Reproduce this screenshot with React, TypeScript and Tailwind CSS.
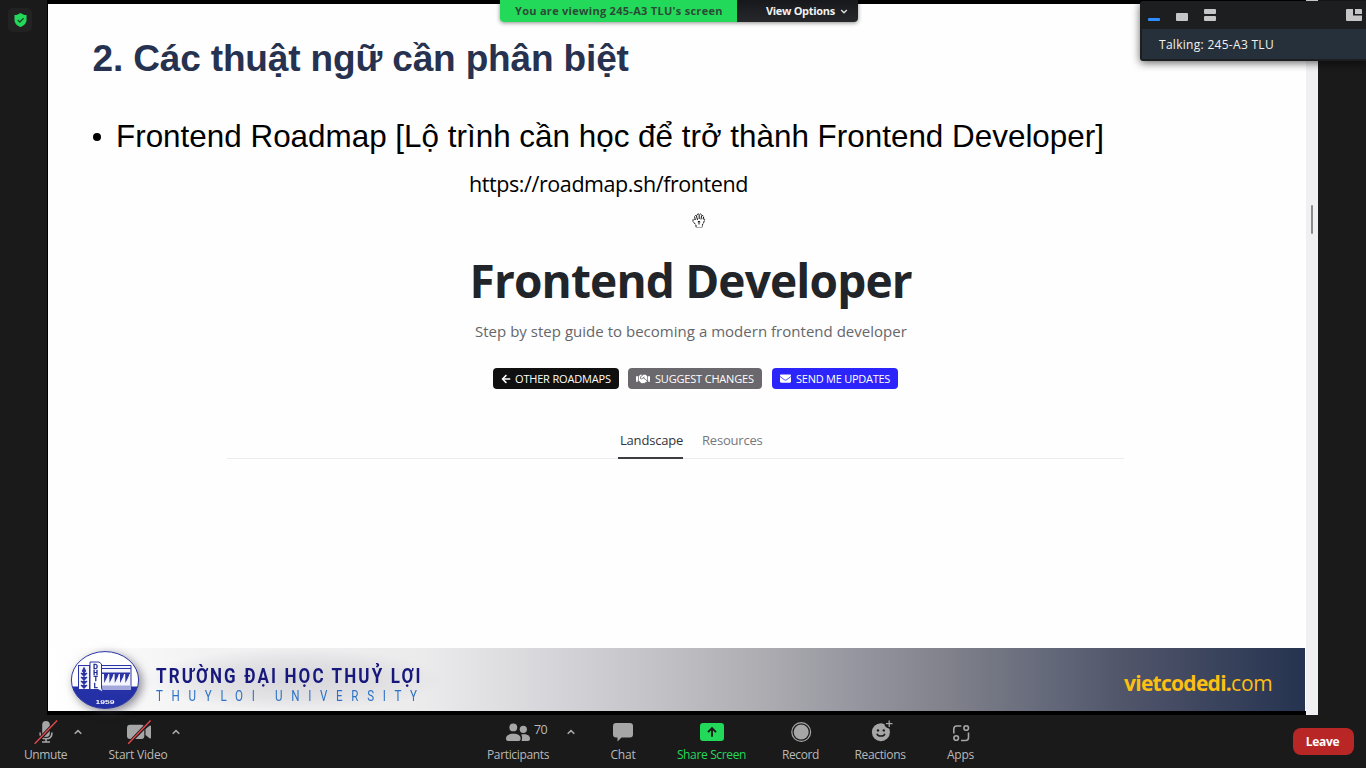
import type { ReactNode } from "react";
import { FaArrowLeft, FaEnvelope, FaHandshake } from "react-icons/fa";

function Caret() {
  return (
    <svg className="mt-[14px] h-[6px] w-[10px] shrink-0" viewBox="0 0 10 6" fill="none" stroke="#a8a8a8" strokeWidth="1.6">
      <path d="M1.7 4.8 5 1.6 8.3 4.8" />
    </svg>
  );
}

function Tool({ label, className, children }: { label: string; className: string; children: ReactNode }) {
  return (
    <div className={`flex shrink-0 flex-col items-center pt-[5px] text-[#b9b9b9] ${className}`}>
      <svg className="h-6 w-6 shrink-0 overflow-visible" viewBox="0 0 24 24" fill="#a6a6a6">
        {children}
      </svg>
      <span className="mt-[3px] h-4 text-[12px] leading-4 whitespace-nowrap">{label}</span>
    </div>
  );
}

function Slash() {
  return (
    <>
      <path d="M.3 24.4 22.9 1" stroke="#1a1a1a" strokeWidth="3.4" />
      <path d="M.7 23.7 23.1.4" stroke="#e5484d" strokeWidth="1.4" />
    </>
  );
}

function Seal() {
  return (
    <svg className="mt-[1px] h-[60px] w-[70px] shrink-0 drop-shadow-[3px_3px_5px_rgba(60,60,75,0.6)]" viewBox="0 0 70 60">
      <defs>
        <clipPath id="seal">
          <ellipse cx="35" cy="30" rx="33.6" ry="28.4" />
        </clipPath>
      </defs>
      <ellipse cx="35" cy="30" rx="33.6" ry="28.4" fill="#fff" />
      <g clipPath="url(#seal)">
        <rect x="0" y="36.5" width="70" height="24" fill="#2330a6" />
        <rect x="8.5" y="15.5" width="11" height="24" fill="#f4f5fc" stroke="#2a34a4" />
        <path d="M14 19v20M11 23l3 3 3-3M11 27l3 3 3-3M11 31l3 3 3-3M11 35l3 3 3-3M14 18l-1.5 3 1.5 2 1.5-2z" stroke="#2a34a4" strokeWidth="1.3" fill="#2a34a4" />
        <rect x="31" y="15.5" width="30" height="24" fill="#f4f5fc" />
        <path d="M31 15.5h30M31 18.5h30M31 40h30M31 43h30M61 15.5v24" stroke="#2a34a4" strokeWidth="1" fill="none" />
        <path d="M32 22.5h28v1.5H32zM34 24h4.2l-1 3-3 6zM39.3 24h4.2l-1 3-3 6zM44.6 24h4.2l-1 3-3 6zM49.9 24h4.2l-1 3-3 6zM55.2 24h4.2l-1 3-3 6z" fill="#2a34a4" />
        <path d="M32 35.5h29v4.500H32z" fill="#a3a8dc" />
        <path d="M20 12h9l2.500 2v24l1.500 4-5-2.500h-8z" fill="#fff" stroke="#2a34a4" />
      </g>
      <ellipse cx="35" cy="30" rx="33.6" ry="28.4" fill="none" stroke="#2a34a4" />
      <g fontFamily="'Liberation Sans', sans-serif" fontWeight="700" textAnchor="middle">
        <g fill="#1e2795" stroke="#1e2795" strokeWidth="0.3" fontSize="6.4">
          <text x="25.6" y="19.2">D</text>
          <text x="25.6" y="25.3">H</text>
          <text x="25.6" y="31.4">T</text>
          <text x="25.6" y="37.5">L</text>
        </g>
        <text x="35" y="53.500" fill="#fff" fontSize="6" textLength="19" lengthAdjust="spacingAndGlyphs">1959</text>
      </g>
    </svg>
  );
}

function HandCursor() {
  return (
    <svg className="absolute top-[209px] left-[644px] h-[15px] w-[14px]" viewBox="0 0 14 15" fill="#fff" stroke="#111" strokeWidth="1">
      <path d="M4 14v-2L1 8.500V6.500l1.500-.5L3.500 7 2.500 3.500 3.500 2.500l1 .5.500-1.500L6.500 1l.8.7L8.500 1l1 .8V3l1.300-.5.9 1-.7 3 .9-.8.9.8L11.500 10 10.300 12v2" strokeDasharray="2.500 .7" />
      <path d="M4.500 3l1 4M7.200 1.700V6M9.500 3 9 6.500M7 8.500v3M5.800 9l1.200-.8L8.200 9" />
      <path d="M4 14.500h6.500" stroke="#aaa" />
    </svg>
  );
}

function RoadmapButton({ icon, label, className }: { icon: ReactNode; label: string; className: string }) {
  return (
    <div className={`flex h-[21px] items-center rounded-[4px] text-[11px] leading-[21px] font-medium whitespace-nowrap text-white ${className}`}>
      {icon}
      <span>{label}</span>
    </div>
  );
}

function Slide() {
  return (
    <main className="relative flex h-[707px] w-[1258px] flex-col bg-[#fefefe]">
      <h1 className="mt-[35px] h-10 pl-[44.500px] font-['Liberation_Sans',sans-serif] text-[37px] leading-10 font-bold tracking-[-0.150px] whitespace-nowrap text-[#26324f]">
        2. Các thuật ngữ cần phân biệt
      </h1>
      <div className="mt-[38px] flex h-10 items-center pl-[45px] font-['Liberation_Sans',sans-serif] text-[31.4px] leading-10 tracking-[0.010px] whitespace-nowrap text-black">
        <span className="mr-[15px] size-2 rounded-full bg-black" />
        <p>Frontend Roadmap [Lộ trình cần học để trở thành Frontend Developer]</p>
      </div>
      <p className="mt-[13px] h-7 pl-[421px] text-[21.500px] leading-7 tracking-[-0.42px] whitespace-nowrap text-black">https://roadmap.sh/frontend</p>
      <HandCursor />
      <h2 className="mt-[52px] h-[60px] pl-[421.500px] text-[46px] leading-[60px] font-bold tracking-[-0.850px] whitespace-nowrap text-[#212529]">Frontend Developer</h2>
      <p className="mt-[10px] h-[21px] pl-[427px] text-[15px] leading-[22px] tracking-[0.020px] whitespace-nowrap text-[#66666a]">
        Step by step guide to becoming a modern frontend developer
      </p>
      <div className="mt-[27px] flex pl-[445px] tracking-[-0.180px]">
        <RoadmapButton className="w-[126px] bg-[#101010] pl-[8px]" icon={<FaArrowLeft className="mr-[4px] size-[10px]" />} label="OTHER ROADMAPS" />
        <RoadmapButton className="ml-[9px] w-[134px] bg-[#6a686c] pl-[8px]" icon={<FaHandshake className="mr-[5px] size-[14px]" />} label="SUGGEST CHANGES" />
        <RoadmapButton className="ml-[10px] w-[126px] bg-[#2b25fb] pl-[8px] tracking-[-0.250px]" icon={<FaEnvelope className="mr-[5px] size-[11px]" />} label="SEND ME UPDATES" />
      </div>
      <div className="mt-[41px] ml-[179px] flex h-[29px] w-[897px] border-b border-[#ececee] pl-[391px] text-[13px] leading-5 tracking-[-0.200px]">
        <span className="h-[29px] w-[65px] border-b-2 border-[#3c3c42] pl-[2px] text-[#33333a]">Landscape</span>
        <span className="ml-[19px] text-[#77777b]">Resources</span>
      </div>
      <footer className="mt-auto flex h-[63px] w-[1257px] items-center bg-[linear-gradient(90deg,#ffffff_0%,#f3f3f4_12%,#ebebec_30%,#d8d8dc_39%,#c6c5ca_47%,#aeadb2_56.600%,#95959f_64.500%,#80818a_71.700%,#64697a_79.600%,#52566b_85.200%,#253350_100%)] pl-[22px]">
        <Seal />
        <div className="ml-[4px] flex h-[63px] w-[300px] flex-col bg-[radial-gradient(closest-side,#c4c4cc90_0%,#ccccd260_60%,transparent_100%)] pl-[12px] font-['Roboto',sans-serif] whitespace-nowrap">
          <span className="mt-[16px] h-6 origin-left scale-x-[0.85] text-[20px] leading-6 font-bold tracking-[2.500px] text-[#17187c]">TRƯỜNG ĐẠI HỌC THUỶ LỢI</span>
          <span className="mt-[2px] h-4 origin-left scale-x-[0.8] text-[14.500px] leading-[13px] tracking-[10.850px] text-[#2d72c4]">THUYLOI UNIVERSITY</span>
        </div>
        <div className="mt-[6px] ml-auto pr-[32.500px] text-[21px] leading-8 whitespace-nowrap text-[#fdbf12]">
          <span className="font-bold tracking-[-0.720px]">vietcodedi.</span>
          <span className="tracking-[-0.250px]">com</span>
        </div>
      </footer>
    </main>
  );
}

function ShareBanner() {
  return (
    <div className="absolute top-0 left-[500px] flex h-[22px] w-[358px] overflow-hidden rounded-b-[4px] text-[11px] leading-[21px] font-bold whitespace-nowrap shadow-[0_1px_4px_rgba(0,0,0,0.45)]">
      <div className="w-[237px] bg-[#23d959] pl-[15px] tracking-[0.290px] text-[#2c4a37]">You are viewing 245-A3 TLU's screen</div>
      <div className="flex flex-1 items-center bg-[linear-gradient(#17181b,#27282b)] pl-[29px] tracking-[-0.320px] text-[#f2f2f2]">
        <span className="h-[22px]">View Options</span>
        <svg className="ml-[5px] h-[5px] w-[8px]" viewBox="0 0 8 5" fill="none" stroke="#ddd" strokeWidth="1.400">
          <path d="M1.200 1 4 3.700 6.800 1" />
        </svg>
      </div>
    </div>
  );
}

function SpeakerPanel() {
  return (
    <div className="absolute top-[1px] left-[1140px] h-[60px] w-[226px] rounded-l-[3px] bg-[#1c1e20] pb-[2px] pl-[2px] shadow-[0_2px_8px_rgba(0,0,0,0.6)]">
      <svg className="block h-[28px] w-[224px]" viewBox="0 0 224 28" fill="#c6c6c6">
        <rect x="6" y="17" width="12" height="3" rx="1" fill="#2e8cff" />
        <rect x="34" y="12" width="12" height="8" rx="1" />
        <rect x="62" y="8" width="12" height="5" rx="1" />
        <rect x="62" y="15" width="12" height="5" rx="1" />
        <path d="M205 8h6v6.500h9V19a1 1 0 0 1-1 1h-14a1 1 0 0 1-1-1V9a1 1 0 0 1 1-1zM213 8h6a1 1 0 0 1 1 1v4h-7z" />
      </svg>
      <p className="h-[30px] bg-[#26303a] pl-[17px] text-[12px] leading-[31px] tracking-[0.290px] text-[#f0f0f0]">Talking: 245-A3 TLU</p>
    </div>
  );
}

function Toolbar() {
  return (
    <nav className="flex h-[53px] bg-[#1a1a1a]">
      <Tool label="Unmute" className="ml-[24px] w-[43px] tracking-[-0.400px]">
        <rect x="8.200" y="1" width="7.600" height="16" rx="3.800" />
        <path d="M6 12.500c0 4 2.400 6.300 6 6.300s6-2.300 6-6.300M12 18.800V22M8 22h8" fill="none" stroke="#a6a6a6" strokeWidth="1.600" />
        <Slash />
      </Tool>
      <div className="ml-[6px]"><Caret /></div>
      <Tool label="Start Video" className="ml-[25px] w-[60px] tracking-[-0.200px]">
        <rect x="1" y="4.700" width="17.300" height="14.300" rx="3" />
        <path d="M19.500 9 23.500 5.800q1.500-.7 1.500.8v10.800q0 1.500-1.500.8L19.500 15z" />
        <g transform="translate(1.500 0)"><Slash /></g>
      </Tool>
      <div className="ml-[3px]"><Caret /></div>
      <Tool label="Participants" className="ml-[306px] w-[62px] tracking-[-0.350px]">
        <circle cx="7.300" cy="7.400" r="3.900" />
        <path d="M0 18.500c0-3 2.500-4.700 7.300-4.700s7.300 1.700 7.300 4.700c0 1.500-.5 2.500-2 2.500H2c-1.500 0-2-1-2-2.500z" />
        <circle cx="17.300" cy="9.300" r="3.600" />
        <path d="M15.200 14.600c5-1 8.800.6 8.800 4 0 1.400-.5 2.400-2 2.400h-6.500c.8-2.300.8-4.300-.3-6.400z" />
      </Tool>
      <span className="-ml-[15px] h-5 w-[14px] pt-[6px] text-[12.500px] leading-[17px] tracking-[-0.700px] text-[#b9b9b9]">70</span>
      <div className="ml-[18px]"><Caret /></div>
      <Tool label="Chat" className="ml-[34px] w-[26px] tracking-[-0.200px]">
        <path d="M5 3h14a3 3 0 0 1 3 3v8.500a3 3 0 0 1-3 3h-8.500L6.500 21.500v-4H5a3 3 0 0 1-3-3V6a3 3 0 0 1 3-3z" />
      </Tool>
      <Tool label="Share Screen" className="ml-[40.500px] w-[70px] tracking-[-0.350px] [&>span]:text-[#23d959]">
        <rect x="0" y="3" width="24" height="18" rx="3" fill="#23d959" />
        <path d="M12 16.800V8.500M8 12.200l4-4 4 4" fill="none" stroke="#1a1a1a" strokeWidth="1.900" />
      </Tool>
      <Tool label="Record" className="ml-[35px] w-[38px] tracking-[-0.400px]">
        <circle cx="12.200" cy="12" r="9.400" fill="none" stroke="#a6a6a6" strokeWidth="1.200" />
        <circle cx="12.200" cy="12" r="7.500" />
      </Tool>
      <Tool label="Reactions" className="ml-[35px] w-[51px] tracking-[-0.350px]">
        <circle cx="12.900" cy="12.200" r="9" />
        <circle cx="21.200" cy="3.700" r="4.800" fill="#1a1a1a" />
        <path d="M21.200 .4v6.600M17.900 3.700h6.600" stroke="#a6a6a6" strokeWidth="1.300" />
        <circle cx="10" cy="10.400" r="1.200" fill="#1a1a1a" />
        <circle cx="15.800" cy="10.400" r="1.200" fill="#1a1a1a" />
        <path d="M8.900 13.700c1 3.200 7 3.200 8 0" fill="none" stroke="#1a1a1a" strokeWidth="1.500" />
      </Tool>
      <Tool label="Apps" className="ml-[41px] w-[28px] tracking-[-0.200px]">
        <g fill="none" stroke="#a6a6a6" strokeWidth="1.600">
          <path d="M4.800 13.500V9a3 3 0 0 1 3-3h4.500M19.500 12.500V17.500a3 3 0 0 1-3 3h-4.500" />
          <circle cx="17.200" cy="8" r="2.300" />
          <circle cx="7.200" cy="18" r="2.300" />
        </g>
      </Tool>
      <button className="mt-[13px] mr-[12px] ml-auto h-[27px] w-[61px] rounded-[8px] bg-[#b92626] pr-[2px] text-[12px] leading-[26px] font-bold tracking-[-0.350px] text-white">Leave</button>
    </nav>
  );
}

export default function App() {
  return (
    <div className="relative flex h-[768px] w-[1366px] flex-col overflow-hidden bg-[#1a1a1a] font-['Open_Sans','Noto_Sans',sans-serif]">
      <div className="flex h-[715px]">
        <aside className="w-[47px] p-2">
          <div className="grid size-6 place-items-center rounded-[5px] bg-[#222222]">
            <svg className="h-[14px] w-[13px]" viewBox="0 0 13 14">
              <path d="M6.500 0c1.700 1.300 3.700 2 6 2.100V7c0 3.300-2.500 5.800-6 7C3 12.800.5 10.300.5 7V2.100C2.800 2 4.800 1.300 6.500 0z" fill="#23d959" />
              <path d="M3.800 7l2 2 3.800-3.800" fill="none" stroke="#1d4d2c" strokeWidth="1.400" />
            </svg>
          </div>
        </aside>
        <div className="bg-black py-[4px] pl-[1px]">
          <Slide />
        </div>
        <div className="w-[12px] bg-[#f0eff3] pt-[205px] pl-[5px]">
          <div className="h-[29px] w-[2px] rounded-full bg-[#8a898d]" />
        </div>
      </div>
      <Toolbar />
      <ShareBanner />
      <SpeakerPanel />
    </div>
  );
}
